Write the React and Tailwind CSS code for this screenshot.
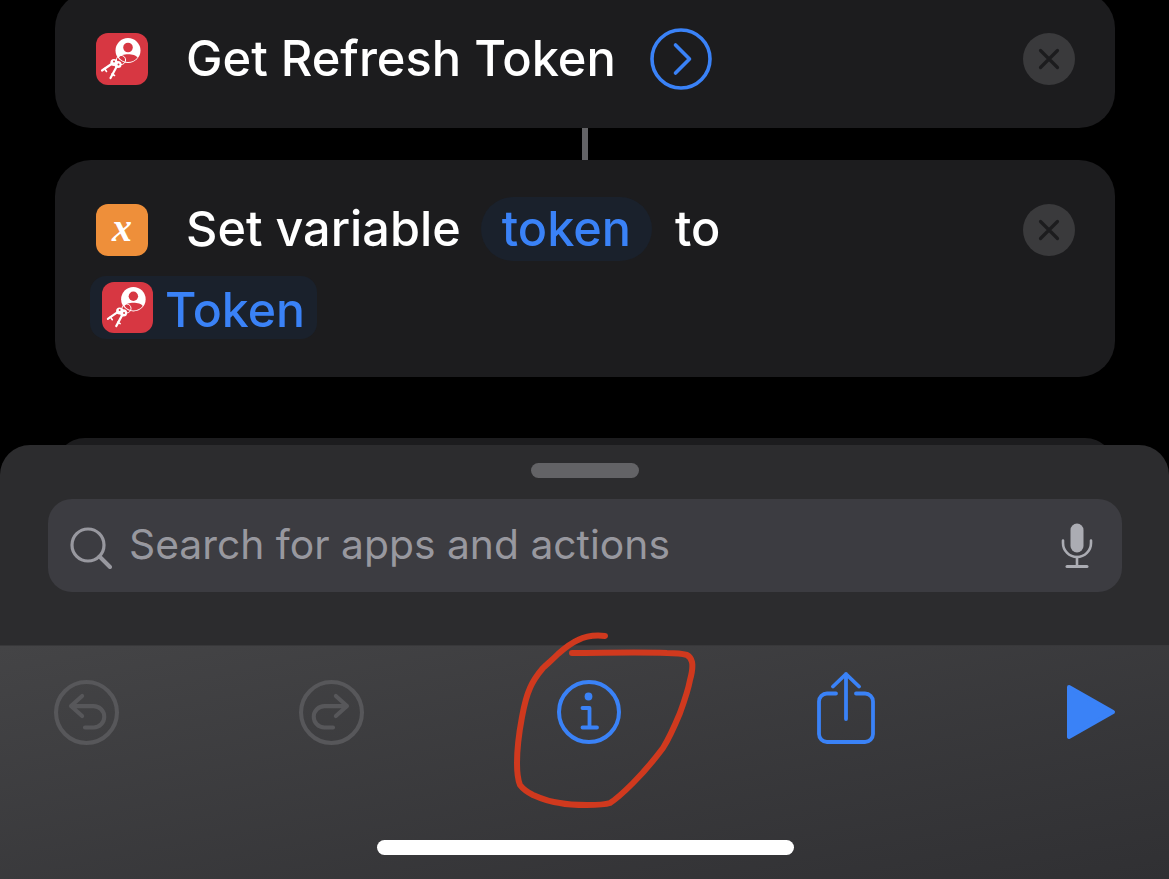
const FONT = "font-['Inter','Noto_Sans',sans-serif]"

function KeysIcon({ className }) {
  return (
    <div className={`rounded-[12px] bg-[#d73742] shrink-0 ${className}`}>
      <svg viewBox="0 0 52 52" className="w-full h-full">
        {/* tag */}
        <circle cx="32" cy="17.5" r="12.5" fill="#fff" />
        <circle cx="32" cy="14.5" r="4.8" fill="#d73742" />
        <path d="M23 24.5 C25 20 39 20 41.5 24.5 C37 30.5 27 30.5 23 24.5Z" fill="#d73742" />
        <circle cx="25" cy="27" r="4.6" fill="none" stroke="#fff" strokeWidth="1" />
        {/* keys */}
        <g fill="none" stroke="#fff" strokeLinecap="round">
          <path d="M17 30 L6 37.5" strokeWidth="2.2" />
          <path d="M8.5 35.5 L10.5 38.5" strokeWidth="1.6" />
          <path d="M21 33 L14.5 45" strokeWidth="2.2" />
          <path d="M16 41 L18.5 42.5" strokeWidth="1.6" />
        </g>
        <circle cx="18" cy="29.5" r="3.6" fill="#fff" />
        <circle cx="22" cy="31.5" r="3.6" fill="#fff" />
        <circle cx="18" cy="28.5" r="1" fill="#d73742" />
        <circle cx="22.5" cy="31.5" r="1" fill="#d73742" />
      </svg>
    </div>
  )
}

function CloseButton() {
  return (
    <div className="w-[52px] h-[52px] rounded-full bg-[#3a3a3c] flex items-center justify-center shrink-0">
      <svg viewBox="0 0 24 24" className="w-[24px] h-[24px]" fill="none" stroke="#1c1c1e" strokeWidth="3.2" strokeLinecap="round">
        <path d="M3.5 3.5 L20.5 20.5 M20.5 3.5 L3.5 20.5" />
      </svg>
    </div>
  )
}

function HistoryIcon({ flip }) {
  return (
    <svg viewBox="0 0 64 64" className={`w-[65px] h-[65px] shrink-0 ${flip ? '-scale-x-100' : ''}`} fill="none" stroke="#57575a" strokeWidth="4" strokeLinecap="round" strokeLinejoin="round">
      <circle cx="32" cy="32" r="30" />
      <path d="M27.7 15.7 L16.7 25.7 L27.7 35.5 M16.7 25.7 H39 a10.5 10.5 0 0 1 0 21 H30.5" />
    </svg>
  )
}

export default function App() {
  return (
    <div className={`relative h-[879px] overflow-hidden bg-black flex flex-col ${FONT}`}>
      {/* Get Refresh Token */}
      <div className="-mt-[8px] ml-[55px] mr-[54px] h-[136px] shrink-0 rounded-[36px] bg-[#1c1c1e] flex items-center pl-[41px] pr-[40px] pb-[2px]">
        <KeysIcon className="w-[52px] h-[52px]" />
        <span className="ml-[38px] text-[48.8px] font-[450] leading-[56px] text-white whitespace-nowrap">Get Refresh Token</span>
        <svg viewBox="0 0 62 62" className="ml-[34px] w-[62px] h-[62px] shrink-0" fill="none" stroke="#3a82f7" strokeWidth="3.6" strokeLinecap="round" strokeLinejoin="round">
          <circle cx="31" cy="31" r="29" />
          <path d="M25.5 17 L39.5 31 L25.5 45" />
        </svg>
        <div className="ml-auto"><CloseButton /></div>
      </div>

      <div className="w-[6px] h-[32px] shrink-0 mx-auto bg-[#636366]" />

      {/* Set variable */}
      <div className="ml-[55px] mr-[54px] h-[217px] shrink-0 rounded-[36px] bg-[#1c1c1e] pt-[37px] pl-[35px] pr-[40px]">
        <div className="flex items-center h-[64px]">
          <div className="ml-[6px] mt-[2px] w-[52px] h-[52px] rounded-[12px] bg-[#ee8f3a] flex items-center justify-center shrink-0">
            <span className="font-['Liberation_Serif',serif] italic font-bold text-[40px] leading-none text-white -mt-[5px]">x</span>
          </div>
          <span className="ml-[38px] text-[48.6px] font-[450] leading-[56px] text-white whitespace-nowrap">Set variable</span>
          <span className="ml-[20px] h-[64px] rounded-[32px] bg-[#1a212c] px-[21px] flex items-center text-[48.6px] font-[450] leading-[56px] text-[#3a82f7]">token</span>
          <span className="ml-[23px] text-[48.6px] font-[450] leading-[56px] text-white">to</span>
          <div className="ml-auto mt-[2px]"><CloseButton /></div>
        </div>
        <div className="mt-[15px] w-[227px] h-[63px] rounded-[16px] bg-[#1a212c] flex items-center pl-[12px]">
          <KeysIcon className="w-[51px] h-[51px]" />
          <span className="ml-[12px] mt-[4px] text-[48.2px] font-[450] leading-[56px] text-[#3a82f7]">Token</span>
        </div>
      </div>

      {/* next card, mostly behind the sheet */}
      <div className="mt-[61px] ml-[55px] mr-[54px] h-[7px] shrink-0 overflow-hidden">
        <div className="h-[60px] rounded-[36px] bg-[#1c1c1e]" />
      </div>

      {/* bottom sheet */}
      <div className="flex-1 rounded-t-[30px] bg-[#2c2c2e] flex flex-col overflow-hidden">
        <div className="mt-[18px] mx-auto w-[108px] h-[15px] rounded-full bg-[#636366] shrink-0" />
        <div className="mt-[21px] ml-[48px] mr-[47px] h-[93px] shrink-0 rounded-[24px] bg-[#3c3c41] flex items-center pl-[22px] pr-[29px]">
          <svg viewBox="0 0 42 50" className="w-[42px] h-[50px] shrink-0" fill="none" stroke="#98989f" strokeWidth="3.2" strokeLinecap="round">
            <circle cx="18" cy="24" r="16" />
            <path d="M29.5 35.5 L40 46" strokeWidth="4" />
          </svg>
          <span className="ml-[17px] -mt-[3px] text-[40.8px] leading-[50px] text-[#98989f] whitespace-nowrap">Search for apps and actions</span>
          <svg viewBox="0 0 32 46" className="ml-auto w-[32px] h-[46px] shrink-0" fill="none" stroke="#abacb3" strokeLinecap="round">
            <rect x="9.5" y="0.5" width="13" height="29" rx="6.5" fill="#abacb3" stroke="none" />
            <path d="M2 17.5 V20 a14 14 0 0 0 28 0 V17.5" strokeWidth="2.6" />
            <path d="M16 34 V43" strokeWidth="2.6" />
            <path d="M6 43.5 H26" strokeWidth="3" />
          </svg>
        </div>

        {/* toolbar */}
        <div className="mt-[53px] flex-1 border-t border-[#38383a] bg-gradient-to-br from-[#444446] to-[#303033] flex flex-col">
          <div className="flex items-center h-[64px] mt-[34px] pl-[54px]">
            <HistoryIcon />
            <div className="ml-[180px]"><HistoryIcon flip /></div>
            <svg viewBox="0 0 66 66" className="ml-[192px] w-[66px] h-[66px] shrink-0" fill="none" stroke="#3a82f7" strokeLinecap="round" strokeLinejoin="round">
              <circle cx="33" cy="33" r="30" strokeWidth="4" />
              <circle cx="32.5" cy="17.5" r="3.9" fill="#3a82f7" stroke="none" />
              <path d="M26.5 29 H33.5 V48.5 M26.5 48.5 H41" strokeWidth="3.8" />
            </svg>
            <svg viewBox="0 0 58 72" className="ml-[195px] -mt-[8px] w-[58px] h-[72px] shrink-0" fill="none" stroke="#3a82f7" strokeWidth="3.8" strokeLinecap="round" strokeLinejoin="round">
              <path d="M19 21.5 H10 a8 8 0 0 0 -8 8 V62 a8 8 0 0 0 8 8 H48 a8 8 0 0 0 8 -8 V29.5 a8 8 0 0 0 -8 -8 H39" />
              <path d="M29 47 V2 M16 14.5 L29 2 L42 14.5" />
            </svg>
            <svg viewBox="0 0 50 56" className="ml-[191px] w-[50px] h-[56px] shrink-0">
              <path d="M3 3 L47 28 L3 53 Z" fill="#3a82f7" stroke="#3a82f7" strokeWidth="4" strokeLinejoin="round" />
            </svg>
          </div>
          <div className="mt-[96px] mx-auto w-[417px] h-[15px] rounded-full bg-white shrink-0 translate-x-[1px]" />
        </div>
      </div>

      {/* hand drawn markup over the screenshot */}
      <svg viewBox="0 0 1169 879" className="absolute inset-0 w-[1169px] h-[879px] pointer-events-none" fill="none" stroke="#d0391e" strokeWidth="6" strokeLinecap="round" strokeLinejoin="round">
        <path d="M605 636 C596 635 586 636 578 640 C571 643 566 647 558 654 C552 660 547 664 543 668 C537 675 533 681 530 688 C526 697 524 706 522 717 C519 733 517 750 517 763 C517 772 518 780 520 785 C523 789 527 792 533 795 C542 799 550 802 560 803 C569 805 578 805 587 805 C596 805 604 805 610 803 C618 798 625 791 633 783 C644 772 654 760 663 748 C670 737 675 725 680 713 C684 702 688 691 690 680 C692 673 693 667 692 662 C691 658 689 656 687 655 C680 653 673 653 667 653 C635 652 603 653 572 653" />
      </svg>
    </div>
  )
}
